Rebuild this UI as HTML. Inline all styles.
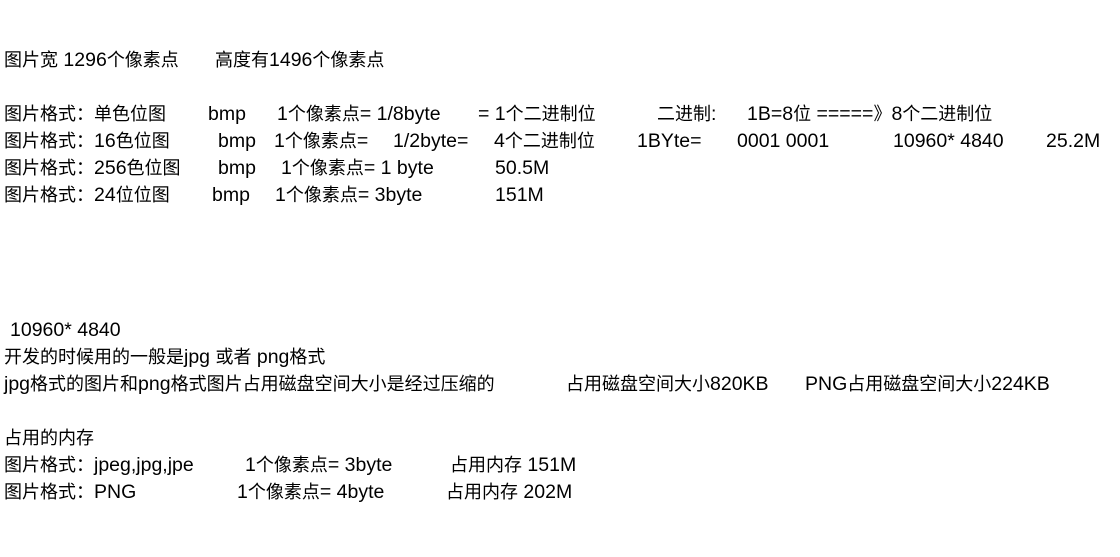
<!DOCTYPE html>
<html><head><meta charset="utf-8"><style>
body{margin:0;width:1120px;height:557px;background:#fff;overflow:hidden;position:relative;font-family:"Liberation Sans","Noto Sans CJK SC",sans-serif;font-size:19.5px;color:#000}
span{position:absolute;white-space:pre;line-height:27px}
i{font-style:normal;font-size:18px}
</style></head><body>
<span style="left:4px;top:47px"><i>图片宽</i> 1296<i>个像素点</i></span><span style="left:215px;top:47px"><i>高度有</i>1496<i>个像素点</i></span>

<span style="left:4px;top:101px"><i>图片格式：单色位图</i></span><span style="left:208px;top:101px">bmp</span><span style="left:277px;top:101px">1<i>个像素点</i>= 1/8byte</span><span style="left:478px;top:101px">= 1<i>个二进制位</i></span><span style="left:657px;top:101px"><i>二进制</i>:</span><span style="left:747px;top:101px">1B=8<i>位</i> =====<i>》</i>8<i>个二进制位</i></span>

<span style="left:4px;top:128px"><i>图片格式：</i>16<i>色位图</i></span><span style="left:218px;top:128px">bmp</span><span style="left:274px;top:128px">1<i>个像素点</i>=</span><span style="left:393px;top:128px">1/2byte=</span><span style="left:494px;top:128px">4<i>个二进制位</i></span><span style="left:637px;top:128px">1BYte=</span><span style="left:737px;top:128px">0001 0001</span><span style="left:893px;top:128px">10960* 4840</span><span style="left:1046px;top:128px">25.2M</span>

<span style="left:4px;top:155px"><i>图片格式：</i>256<i>色位图</i></span><span style="left:218px;top:155px">bmp</span><span style="left:281px;top:155px">1<i>个像素点</i>= 1 byte</span><span style="left:495px;top:155px">50.5M</span>

<span style="left:4px;top:182px"><i>图片格式：</i>24<i>位位图</i></span><span style="left:212px;top:182px">bmp</span><span style="left:275px;top:182px">1<i>个像素点</i>= 3byte</span><span style="left:495px;top:182px">151M</span>

<span style="left:10px;top:317px">10960* 4840</span>
<span style="left:4px;top:344px"><i>开发的时候用的一般是</i>jpg <i>或者</i> png<i>格式</i></span>
<span style="left:4px;top:371px">jpg<i>格式的图片和</i>png<i>格式图片占用磁盘空间大小是经过压缩的</i></span><span style="left:566px;top:371px"><i>占用磁盘空间大小</i>820KB</span><span style="left:805px;top:371px">PNG<i>占用磁盘空间大小</i>224KB</span>

<span style="left:4px;top:425px"><i>占用的内存</i></span>
<span style="left:4px;top:452px"><i>图片格式：</i>jpeg,jpg,jpe</span><span style="left:245px;top:452px">1<i>个像素点</i>= 3byte</span><span style="left:450px;top:452px"><i>占用内存</i> 151M</span>
<span style="left:4px;top:479px"><i>图片格式：</i>PNG</span><span style="left:237px;top:479px">1<i>个像素点</i>= 4byte</span><span style="left:446px;top:479px"><i>占用内存</i> 202M</span>
</body></html>
